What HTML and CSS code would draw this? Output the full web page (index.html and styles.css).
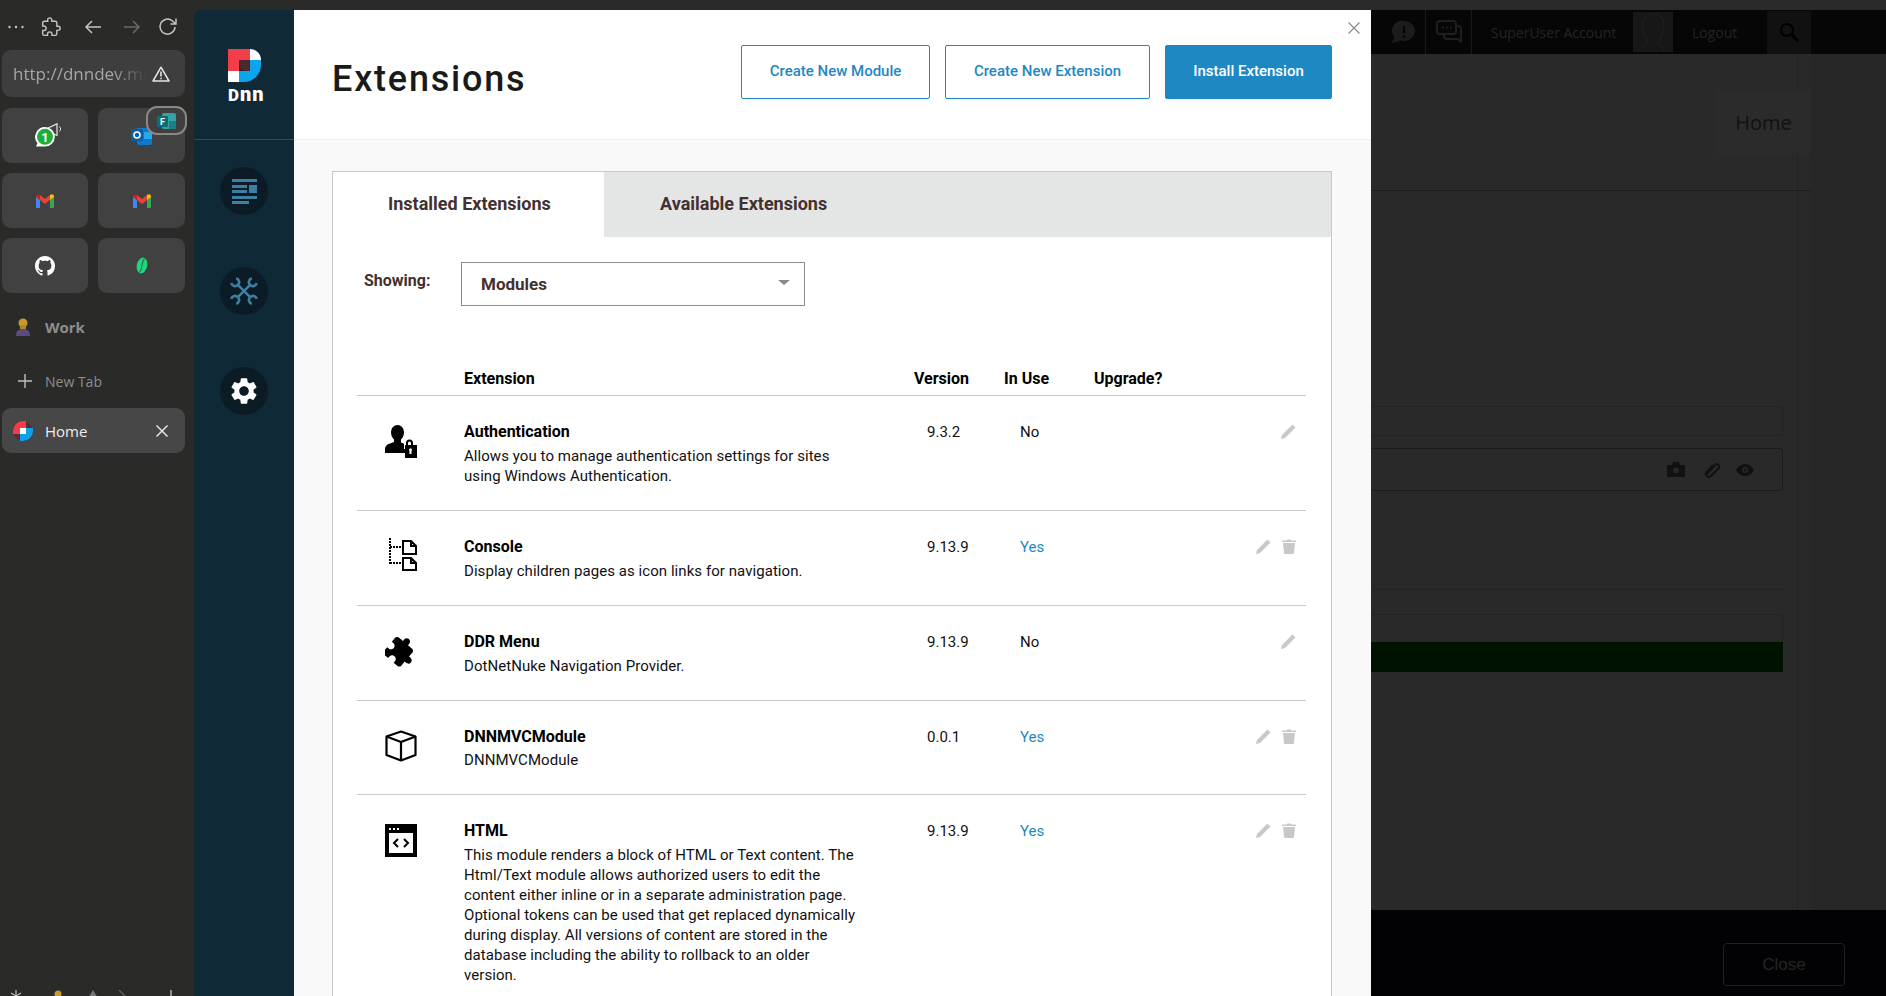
FILE: index.html
```html
<!DOCTYPE html>
<html lang="en">
<head>
  <meta charset="UTF-8" />
  <meta name="viewport" content="width=device-width, initial-scale=1.0" />
  <title>Extensions</title>
  <link rel="stylesheet" href="styles.css">
</head>
<body>
  <svg class="defs" width="0" height="0">
    <symbol id="i-gmail" viewBox="0 0 18 14">
      <path fill="#4285f4" d="M0 2v11a1 1 0 0 0 1 1h3V6z"/>
      <path fill="#34a853" d="M14 6v8h3a1 1 0 0 0 1-1V2z"/>
      <path fill="#ea4335" d="M4 6V1l5 4 5-4v5L9 10z"/>
      <path fill="#c5221f" d="M0 2a2 2 0 0 1 3-1.500L4 1v5L0 3z"/>
      <path fill="#fbbc04" d="M14 1l1-.5A2 2 0 0 1 18 2v1l-4 3z"/>
    </symbol>
    <symbol id="i-pencil" viewBox="0 0 15 15">
      <path fill="#c8c8c8" d="M0 15l1-4L11.500 .5l3 3L4 14z"/>
    </symbol>
    <symbol id="i-trash" viewBox="0 0 14 15">
      <path fill="#c8c8c8" d="M1 4h12l-1 10a1 1 0 0 1-1 1H3a1 1 0 0 1-1-1zM0 1.500h4.500L5.500 .5h3l1 1H14V3H0z"/>
    </symbol>
  </svg>

  <aside class="browser-side">
    <div class="nav-icons">
      <svg class="dots" width="16" height="4" viewBox="0 0 16 4" fill="#c4c4c4"><circle cx="1.500" cy="2" r="1.200"/><circle cx="8" cy="2" r="1.200"/><circle cx="14.500" cy="2" r="1.200"/></svg>
      <svg width="20" height="20" viewBox="0 0 24 24"><path fill="none" stroke="#c4c4c4" stroke-width="1.700" d="M20.500 11H19V7c0-1.100-.9-2-2-2h-4V3.500a2.500 2.500 0 0 0-5 0V5H4c-1.100 0-2 .9-2 2v3.800h1.500a2.700 2.700 0 0 1 0 5.400H2V20c0 1.100.9 2 2 2h3.800v-1.500a2.700 2.700 0 0 1 5.400 0V22H17c1.100 0 2-.9 2-2v-4h1.500a2.500 2.500 0 0 0 0-5z"/></svg>
      <svg class="nav-back" width="18" height="16" viewBox="0 0 18 16"><path fill="none" stroke="#c4c4c4" stroke-width="1.500" d="M17 8H2M8 2L2 8l6 6"/></svg>
      <svg class="nav-fwd" width="18" height="16" viewBox="0 0 18 16"><path fill="none" stroke="#6a6a6a" stroke-width="1.500" d="M1 8h15M10 2l6 6-6 6"/></svg>
      <svg class="nav-reload" width="20" height="20" viewBox="0 0 20 20"><path fill="none" stroke="#c4c4c4" stroke-width="1.500" d="M17 10a7.500 7.500 0 1 1-2.500-6L18 7M18 1.500V7h-5.500"/></svg>
    </div>
    <div class="url-box">
      <span class="url-text">http://dnndev.me</span>
      <svg width="18" height="16" viewBox="0 0 18 16"><path fill="none" stroke="#e4e4e4" stroke-width="1.500" stroke-linejoin="round" d="M9 1.200L17 15H1z"/><path stroke="#e4e4e4" stroke-width="1.600" d="M9 5.500v5M9 11.800v1.500"/></svg>
    </div>
    <div class="pinned">
      <div class="tile">
        <svg width="32" height="26" viewBox="0 0 32 26">
          <path fill="none" stroke="#ddd" stroke-width="1.300" d="M18 5.500L28 .8v11.500l-6-2"/>
          <path fill="none" stroke="#ddd" stroke-width="1" d="M30.500 3.500a3.500 3.500 0 0 1 0 5"/>
          <path fill="#fff" d="M16 4a9.800 9.800 0 0 1 0 19.600H7l1.500-3.500A9.800 9.800 0 0 1 16 4z"/>
          <circle cx="16" cy="13.800" r="8" fill="#1fae3a"/>
          <text x="16" y="18.500" class="tile-num">1</text>
        </svg>
      </div>
      <div class="tile tile-outlook">
        <svg width="21" height="19" viewBox="0 0 21 19">
          <path fill="#0f78c8" d="M6 2h13a2 2 0 0 1 2 2v13a2 2 0 0 1-2 2H8a2 2 0 0 1-2-2z"/>
          <path fill="#28a8ea" d="M13 6h8v7h-8z"/>
          <rect x="0" y="3" width="12" height="12" rx="1" fill="#0a5ea8"/>
          <circle cx="6" cy="9" r="3" fill="none" stroke="#fff" stroke-width="1.500"/>
        </svg>
        <div class="forms-pill">
          <svg width="19" height="16" viewBox="0 0 19 16">
            <rect x="5" y="0" width="14" height="16" rx="2" fill="#33a3a8"/>
            <rect x="12" y="8" width="7" height="8" fill="#1b7f85"/>
            <rect x="0" y="3" width="11" height="11" rx="1" fill="#0c6d75"/>
            <text x="5.500" y="12" class="forms-f">F</text>
          </svg>
        </div>
      </div>
      <div class="tile"><svg width="18" height="14"><use href="#i-gmail"/></svg></div>
      <div class="tile"><svg width="18" height="14"><use href="#i-gmail"/></svg></div>
      <div class="tile">
        <svg width="20" height="20" viewBox="0 0 16 16"><path fill="#fff" d="M8 0C3.580 0 0 3.580 0 8c0 3.540 2.290 6.530 5.470 7.590.4.07.55-.17.55-.38 0-.19-.01-.82-.01-1.490-2.010.37-2.530-.49-2.690-.94-.09-.23-.48-.94-.82-1.130-.28-.15-.68-.52-.01-.53.63-.01 1.080.58 1.230.82.72 1.210 1.870.87 2.330.66.07-.52.28-.87.51-1.070-1.780-.2-3.640-.89-3.640-3.950 0-.87.31-1.590.82-2.150-.08-.2-.36-1.020.08-2.120 0 0 .67-.21 2.200.82.64-.18 1.320-.27 2-.27.68 0 1.360.09 2 .27 1.530-1.040 2.200-.82 2.200-.82.44 1.100.16 1.920.08 2.120.51.56.82 1.270.82 2.150 0 3.070-1.870 3.750-3.650 3.950.29.25.54.73.54 1.480 0 1.070-.01 1.930-.01 2.200 0 .21.15.46.55.38A8.013 8.013 0 0 0 16 8c0-4.420-3.580-8-8-8z"/></svg>
      </div>
      <div class="tile">
        <svg width="14" height="17" viewBox="0 0 14 17"><g transform="rotate(12 7 8.500)"><ellipse cx="7" cy="8.500" rx="5.200" ry="8" fill="#1fd67f"/><path fill="none" stroke="#2a6e4d" stroke-width="1" d="M8 1.500C5 5.500 9 10.500 6 15.500"/></g></svg>
      </div>
    </div>
    <div class="group-row">
      <svg width="14" height="18" viewBox="0 0 14 18">
        <path fill="#5a4a80" d="M0 18c0-5 2-7 7-7s7 2 7 7z"/>
        <circle cx="7" cy="5" r="4.500" fill="#c79a2e"/>
        <path fill="#b5862a" d="M4 7h6v4H4z"/>
      </svg>
      <span>Work</span>
    </div>
    <div class="new-tab">
      <svg width="14" height="14" viewBox="0 0 14 14"><path stroke="#c0c0c0" stroke-width="1.400" d="M7 0v14M0 7h14"/></svg>
      <span>New Tab</span>
    </div>
    <div class="active-tab">
      <svg width="20" height="20" viewBox="0 0 20 20">
        <circle cx="10" cy="10" r="10" fill="#5a2b2f"/>
        <path fill="#ef3e4a" d="M10 0A10 10 0 0 0 0 10v3h7V7h6V0z"/>
        <path fill="#0fa0e8" d="M20 10v-3h-7v6H7v7h3a10 10 0 0 0 10-10z"/>
        <path fill="#fff" d="M7 7h6v6H7z"/>
      </svg>
      <span>Home</span>
      <svg class="tab-x" width="12" height="12" viewBox="0 0 12 12"><path stroke="#e4e4e4" stroke-width="1.500" d="M.5 .5l11 11M11.500 .5l-11 11"/></svg>
    </div>
    <div class="tray">
      <svg width="12" height="12" viewBox="0 0 12 12"><path stroke="#bbb" stroke-width="1.200" d="M6 0v12M1 3l10 6M11 3L1 9"/></svg>
      <svg width="12" height="12" viewBox="0 0 12 12"><circle cx="6" cy="4" r="3.500" fill="#c79a2e"/></svg>
      <svg width="12" height="12" viewBox="0 0 12 12"><path fill="#777" d="M6 0l6 10H0z"/></svg>
      <svg width="12" height="12" viewBox="0 0 12 12"><path fill="none" stroke="#666" stroke-width="1.200" d="M1 0l8 8"/></svg>
      <svg width="12" height="12" viewBox="0 0 12 12"><path stroke="#bbb" stroke-width="1.400" d="M6 0v12M0 9h12"/></svg>
    </div>
  </aside>

  <div class="stage">
    <nav class="rail">
      <div class="rail-logo">
        <svg width="33" height="33" viewBox="0 0 33 33">
          <path fill="#f23d4b" d="M0 0H22V11H11V22H0Z"/>
          <path fill="#4d282d" d="M11 11H22V22H17A6 6 0 0 1 11 16Z"/>
          <path fill="#fff" d="M22 0A11 11 0 0 1 33 11H22Z"/>
          <path fill="#0ca4ea" d="M22 11H33V16A17 17 0 0 1 16 33H11V22H22Z"/>
          <path fill="#fff" d="M0 22H11V33H0Z"/>
        </svg>
        <div class="rail-word">D<span>nn</span></div>
      </div>
      <div class="rail-items">
        <div class="rail-btn">
          <svg width="25" height="25" viewBox="0 0 25 25" fill="#3f7ea3">
            <rect x="0" y="0" width="25" height="3"/>
            <rect x="0" y="6" width="15" height="3"/>
            <rect x="17" y="6" width="8" height="8"/>
            <rect x="0" y="11" width="15" height="3"/>
            <rect x="0" y="17" width="25" height="3"/>
            <rect x="0" y="22" width="17" height="3"/>
          </svg>
        </div>
        <div class="rail-btn">
          <svg width="28" height="28" viewBox="0 0 28 28" fill="none" stroke="#3f7ea3" stroke-width="2.600">
            <g transform="rotate(45 14 14)">
              <path d="M14 5V23M10.500 -.5a4 4 0 1 0 7 0M10.500 28.500a4 4 0 1 1 7 0"/>
            </g>
            <g transform="rotate(-45 14 14)">
              <path d="M14 5V23M10.500 -.5a4 4 0 1 0 7 0M10.500 28.500a4 4 0 1 1 7 0"/>
            </g>
          </svg>
        </div>
        <div class="rail-btn">
          <svg width="32" height="32" viewBox="0 0 24 24"><path fill="#fff" d="M19.140 12.940c.04-.3.06-.61.06-.94 0-.32-.02-.64-.07-.94l2.030-1.580c.18-.14.23-.41.12-.61l-1.920-3.320c-.12-.22-.37-.29-.59-.22l-2.390.96c-.5-.38-1.030-.7-1.620-.94l-.36-2.540c-.04-.24-.24-.41-.48-.41h-3.840c-.24 0-.43.17-.47.41l-.36 2.540c-.59.24-1.130.57-1.620.94l-2.390-.96c-.22-.08-.47 0-.59.22L2.740 8.870c-.12.21-.08.47.12.61l2.030 1.580c-.05.3-.09.63-.09.94s.02.64.07.94l-2.030 1.580c-.18.14-.23.41-.12.61l1.920 3.320c.12.22.37.29.59.22l2.390-.96c.5.38 1.030.7 1.620.94l.36 2.540c.05.24.24.41.48.41h3.840c.24 0 .44-.17.47-.41l.36-2.540c.59-.24 1.130-.56 1.620-.94l2.390.96c.22.08.47 0 .59-.22l1.920-3.320c.12-.22.07-.47-.12-.61l-2.010-1.580zM12 15.600c-1.980 0-3.600-1.620-3.600-3.600s1.620-3.600 3.600-3.600 3.600 1.620 3.600 3.600-1.620 3.600-3.600 3.600z"/></svg>
        </div>
      </div>
    </nav>

    <section class="panel">
      <svg class="panel-close" width="12" height="12" viewBox="0 0 12 12"><path stroke="#8c8c8c" stroke-width="1.200" d="M.5 .5l11 11M11.500 .5l-11 11"/></svg>
      <header class="panel-head">
        <h1>Extensions</h1>
        <div class="head-btns">
          <button class="btn btn-module">Create New Module</button>
          <button class="btn btn-ext">Create New Extension</button>
          <button class="btn btn-primary">Install Extension</button>
        </div>
      </header>
      <div class="panel-body">
        <div class="ext-box">
          <div class="tabs">
            <div class="tab tab-active">Installed Extensions</div>
            <div class="tab">Available Extensions</div>
          </div>
          <div class="filter">
            <label>Showing:</label>
            <div class="select">
              <span>Modules</span>
              <i class="caret"></i>
            </div>
          </div>
          <div class="ext-table">
            <div class="ext-row ext-header">
              <div></div>
              <div>Extension</div>
              <div>Version</div>
              <div>In Use</div>
              <div>Upgrade?</div>
              <div></div>
            </div>

            <div class="ext-row">
              <div class="ext-icon">
                <svg width="32" height="33" viewBox="0 0 32 33" fill="#000">
                  <path d="M6 7a6.500 7 0 0 1 13 0c0 3-1 6-3 7.500v3l3 1.200V24h3v4H0v-4c0-3 2-4.500 5-5.500l4-1.500v-2.500C7 13 6 10 6 7z"/>
                  <path d="M20 33V20h1v-2a3.500 3.500 0 0 1 7 0v2h4v13z"/>
                  <path fill="#fff" d="M23 20v-2a1.500 1.500 0 0 1 3 0v2zM27 25a1.500 1.500 0 1 0-2.500 1v3h2v-3z"/>
                </svg>
              </div>
              <div class="ext-info">
                <strong>Authentication</strong>
                <p>Allows you to manage authentication settings for sites using Windows Authentication.</p>
              </div>
              <div class="ext-ver">9.3.2</div>
              <div class="ext-use">No</div>
              <div></div>
              <div class="ext-actions">
                <svg width="15" height="15"><use href="#i-pencil"/></svg>
              </div>
            </div>

            <div class="ext-row">
              <div class="ext-icon ext-icon-console">
                <svg width="28" height="33" viewBox="0 0 28 33" fill="none" stroke="#000" stroke-width="2">
                  <path stroke-dasharray="2 1" d="M1 0v26M1 9h11M1 25h11"/>
                  <path d="M14 3h8l5 5v8H14zM22 3v5h5"/>
                  <path d="M14 20h8l5 5v7H14zM22 20v5h5"/>
                </svg>
              </div>
              <div class="ext-info">
                <strong>Console</strong>
                <p>Display children pages as icon links for navigation.</p>
              </div>
              <div class="ext-ver">9.13.9</div>
              <div class="ext-use ext-yes">Yes</div>
              <div></div>
              <div class="ext-actions">
                <svg width="15" height="15"><use href="#i-pencil"/></svg>
                <svg width="14" height="15"><use href="#i-trash"/></svg>
              </div>
            </div>

            <div class="ext-row">
              <div class="ext-icon">
                <svg width="32" height="33" viewBox="0 0 24 24"><path transform="rotate(40 12 12)" fill="#000" d="M20.500 11H19V7c0-1.100-.9-2-2-2h-4V3.500C13 2.120 11.880 1 10.500 1S8 2.120 8 3.500V5H4c-1.100 0-1.990.9-1.990 2v3.800H3.500c1.490 0 2.700 1.210 2.700 2.700s-1.210 2.700-2.700 2.700H2V20c0 1.100.9 2 2 2h3.800v-1.500c0-1.490 1.210-2.700 2.700-2.700 1.490 0 2.700 1.210 2.700 2.700V22H17c1.100 0 2-.9 2-2v-4h1.500c1.380 0 2.500-1.120 2.500-2.500S21.880 11 20.500 11z"/></svg>
              </div>
              <div class="ext-info">
                <strong>DDR Menu</strong>
                <p>DotNetNuke Navigation Provider.</p>
              </div>
              <div class="ext-ver">9.13.9</div>
              <div class="ext-use">No</div>
              <div></div>
              <div class="ext-actions">
                <svg width="15" height="15"><use href="#i-pencil"/></svg>
              </div>
            </div>

            <div class="ext-row ext-row-short">
              <div class="ext-icon">
                <svg width="32" height="32" viewBox="0 0 32 32" fill="none" stroke="#000" stroke-width="2.200" stroke-linejoin="round">
                  <path d="M16 1.500L30.500 6.500V25L16 30.500 1.500 25V6.500z"/>
                  <path d="M1.500 6.500L16 12l14.500-5.500M16 12v18.500"/>
                </svg>
              </div>
              <div class="ext-info">
                <strong>DNNMVCModule</strong>
                <p>DNNMVCModule</p>
              </div>
              <div class="ext-ver">0.0.1</div>
              <div class="ext-use ext-yes">Yes</div>
              <div></div>
              <div class="ext-actions">
                <svg width="15" height="15"><use href="#i-pencil"/></svg>
                <svg width="14" height="15"><use href="#i-trash"/></svg>
              </div>
            </div>

            <div class="ext-row ext-row-html">
              <div class="ext-icon">
                <svg width="32" height="33" viewBox="0 0 32 33">
                  <rect width="32" height="33" fill="#000"/>
                  <rect x="4" y="9" width="24" height="20" fill="#fff"/>
                  <path fill="#fff" d="M4 4h2v2H4zM8 4h2v2H8zM12 4h2v2h-2z"/>
                  <path fill="none" stroke="#000" stroke-width="2" d="M13 15l-4 4 4 4M19 15l4 4-4 4"/>
                </svg>
              </div>
              <div class="ext-info">
                <strong>HTML</strong>
                <p>This module renders a block of HTML or Text content. The Html/Text module allows authorized users to edit the content either inline or in a separate administration page. Optional tokens can be used that get replaced dynamically during display. All versions of content are stored in the database including the ability to rollback to an older version.</p>
              </div>
              <div class="ext-ver">9.13.9</div>
              <div class="ext-use ext-yes">Yes</div>
              <div></div>
              <div class="ext-actions">
                <svg width="15" height="15"><use href="#i-pencil"/></svg>
                <svg width="14" height="15"><use href="#i-trash"/></svg>
              </div>
            </div>
          </div>
        </div>
      </div>
    </section>

    <div class="backdrop">
      <div class="site-bar">
        <svg class="bar-alert" width="26" height="24" viewBox="0 0 26 24"><path fill="#1c1c1c" d="M14 1a11 10 0 1 1-4 19.300C8 22 4 23 1 23c2-2 3-3.500 3.200-6A10 10 0 0 1 14 1z"/><path stroke="#060606" stroke-width="2.500" d="M14 6v7M14 15v3"/></svg>
        <div class="bar-chat">
          <svg width="26" height="24" viewBox="0 0 26 24" fill="none" stroke="#1f1f1f" stroke-width="2" stroke-linejoin="round">
            <rect x="1" y="1" width="19" height="13" rx="3"/>
            <path d="M21 6h1a3 3 0 0 1 3 3v10l0 3-3-3H11a3 3 0 0 1-3-3v-1"/>
            <path stroke-dasharray="2 2" d="M6 7.500h10"/>
          </svg>
        </div>
        <span class="bar-user">SuperUser Account</span>
        <div class="bar-avatar">
          <svg width="40" height="40" viewBox="0 0 40 40"><path fill="none" stroke="#1e1e1e" stroke-width="1.500" d="M9 39c0-5 4-6 6-7 0-3-6-10-6-20 0-6 5-10 11-10s11 4 11 10c0 10-6 17-6 20 2 1 6 2 6 7"/></svg>
        </div>
        <span class="bar-logout">Logout</span>
        <div class="bar-search">
          <svg width="20" height="20" viewBox="0 0 20 20" fill="none" stroke="#000" stroke-width="2"><circle cx="8" cy="8" r="6"/><path stroke-width="3" d="M12.500 12.500L19 19"/></svg>
        </div>
      </div>
      <div class="page-wrap">
        <div class="page-main">
          <div class="page-head"><div class="page-tab">Home</div></div>
          <div class="page-content">
            <div class="dash-box"></div>
            <div class="fake-input">
              <svg class="input-cam" width="18" height="15" viewBox="0 0 18 15"><path fill="#111" d="M0 3h5l1-3h6l1 3h5v12H0z"/><circle cx="9" cy="8.500" r="3" fill="#272727"/></svg>
              <svg width="18" height="16" viewBox="0 0 18 16" fill="none" stroke="#111" stroke-width="2"><path d="M3 13L12 3c2-2 5 0 4 3l-8 8c-2 2-6 0-5-3l7-8"/></svg>
              <svg width="18" height="12" viewBox="0 0 18 12"><path fill="#111" d="M0 6c4-8 14-8 18 0-4 8-14 8-18 0z"/><circle cx="9" cy="6" r="3" fill="#272727"/><circle cx="9" cy="6" r="1.200" fill="#111"/></svg>
            </div>
            <div class="thin-line"></div>
            <div class="dash-row"></div>
            <div class="green-bar"></div>
          </div>
        </div>
      </div>
      <div class="page-foot">
        <button class="close-btn">Close</button>
      </div>
    </div>
  </div>
</body>
</html>
```

FILE: styles.css
```css
html, body {
  height: 100%;
}
body {
  margin: 0;
  width: 1886px;
  height: 996px;
  overflow: hidden;
  display: flex;
  background-color: #2a2a29;
  font-family: 'Roboto', 'Liberation Sans', sans-serif;
}
.defs {
  position: absolute;
}
svg {
  display: block;
}

/* browser side bar */
.browser-side {
  width: 194px;
  flex: none;
  height: 996px;
  display: flex;
  flex-direction: column;
  font-family: 'Open Sans', 'Noto Sans', sans-serif;
  overflow: hidden;
}
.nav-icons {
  display: flex;
  align-items: center;
  height: 50px;
  padding: 4px 0 0 8px;
  box-sizing: border-box;
}
.dots {
  margin-right: 17px;
}
.nav-back {
  margin-left: 23px;
}
.nav-fwd {
  margin-left: 21px;
}
.nav-reload {
  margin-left: 17px;
}
.url-box {
  margin: 0 9px 0 2px;
  height: 47px;
  background: #3e3e3e;
  border-radius: 9px;
  display: flex;
  align-items: center;
  justify-content: space-between;
  padding: 0 15px 0 11px;
}
.url-text {
  width: 133px;
  overflow: hidden;
  white-space: nowrap;
  color: #a6a6a6;
  font-size: 17px;
  -webkit-mask-image: linear-gradient(to right, #000 75%, transparent);
  mask-image: linear-gradient(to right, #000 75%, transparent);
}
.pinned {
  display: grid;
  grid-template-columns: 86px 87px;
  grid-auto-rows: 55px;
  gap: 10px;
  margin: 11px 0 0 2px;
}
.tile {
  position: relative;
  background: #414141;
  border-radius: 9px;
  display: flex;
  align-items: center;
  justify-content: center;
}
.tile-num {
  fill: #fff;
  font-size: 13px;
  font-weight: 700;
  text-anchor: middle;
  font-family: 'Roboto', sans-serif;
}
.forms-pill {
  position: absolute;
  top: -2px;
  right: -2px;
  width: 41px;
  height: 29px;
  box-sizing: border-box;
  background: #3f3f3f;
  border: 2px solid #888;
  border-radius: 11px;
  display: flex;
  align-items: center;
  justify-content: center;
}
.forms-f {
  fill: #fff;
  font-size: 9px;
  font-weight: 700;
  text-anchor: middle;
  font-family: 'Roboto', sans-serif;
}
.group-row {
  display: flex;
  align-items: center;
  gap: 15px;
  margin: 22px 0 0 16px;
  height: 24px;
  color: #8e8e8e;
  font-size: 15px;
  font-weight: 700;
}
.new-tab {
  display: flex;
  align-items: center;
  gap: 13px;
  margin: 30px 0 0 18px;
  height: 24px;
  color: #8e8e8e;
  font-size: 14px;
}
.active-tab {
  display: flex;
  align-items: center;
  margin: 15px 9px 0 2px;
  height: 45px;
  padding: 0 17px 0 11px;
  background: #474747;
  border-radius: 9px;
  color: #eee;
  font-size: 15px;
}
.active-tab span {
  margin-left: 12px;
  flex: 1;
}
.tray {
  margin-top: auto;
  margin-bottom: -6px;
  display: grid;
  grid-template-columns: 42px 35px 31px 47px 12px;
  padding-left: 10px;
}

/* stage: rail, modal panel and page behind */
.stage {
  flex: 1;
  display: flex;
  padding-top: 10px;
  min-width: 0;
}
.rail {
  width: 100px;
  flex: none;
  background: #0f2936;
  border-top-left-radius: 7px;
}
.rail-logo {
  height: 130px;
  box-sizing: border-box;
  padding: 39px 0 0 34px;
  border-bottom: 1px solid #2a4c62;
}
.rail-word {
  margin-top: 4px;
  color: #fff;
  font-size: 17px;
  line-height: 17px;
  font-weight: 900;
  letter-spacing: 1px;
}
.rail-word span {
  font-size: 20px;
}
.rail-items {
  display: flex;
  flex-direction: column;
  gap: 52px;
  padding: 27px 0 0 26px;
}
.rail-btn {
  width: 48px;
  height: 48px;
  border-radius: 50%;
  background: #0b1c26;
  display: flex;
  align-items: center;
  justify-content: center;
}
.rail-btn svg {
  overflow: visible;
}

.panel {
  position: relative;
  width: 1077px;
  flex: none;
  background: #f9f9f9;
  display: flex;
  flex-direction: column;
}
.panel-close {
  position: absolute;
  top: 12px;
  right: 11px;
}
.panel-head {
  height: 129px;
  flex: none;
  background: #fff;
  border-bottom: 1px solid #eee;
  display: flex;
  justify-content: space-between;
  padding: 0 39px 0 38px;
}
.panel-head h1 {
  margin: 45px 0 0;
  font-size: 36px;
  line-height: 48px;
  font-weight: 500;
  letter-spacing: 1.8px;
  color: #1a1a1a;
}
.head-btns {
  display: flex;
  gap: 15px;
  padding-top: 35px;
}
.btn {
  height: 54px;
  background: #fff;
  color: #1e88c3;
  border: 1px solid #1e88c3;
  border-radius: 2px;
  font-family: inherit;
  font-size: 15px;
  font-weight: 500;
  padding: 0 0 2px;
  cursor: pointer;
}
.btn-module {
  width: 189px;
}
.btn-ext {
  width: 205px;
}
.btn-primary {
  width: 167px;
  background: #1e88c3;
  color: #fff;
}
.panel-body {
  padding: 31px 39px 0 38px;
}
.ext-box {
  background: #fff;
  border: 1px solid #c8c8c8;
  height: 900px;
}
.tabs {
  display: flex;
  background: #e4e6e5;
  height: 65px;
}
.tab {
  display: flex;
  align-items: center;
  padding: 0 56px 2px;
  font-size: 18px;
  font-weight: 700;
  white-space: nowrap;
  color: #43302f;
}
.tab-active {
  width: 271px;
  box-sizing: border-box;
  padding: 0 0 2px 55px;
  background: #fff;
}
.filter {
  display: flex;
  align-items: flex-start;
  padding: 25px 0 0 31px;
}
.filter label {
  width: 97px;
  font-size: 16px;
  line-height: 18px;
  font-weight: 700;
  color: #43302f;
  padding-top: 10px;
}
.select {
  width: 344px;
  height: 44px;
  box-sizing: border-box;
  border: 1px solid #8e8e8e;
  display: flex;
  align-items: center;
  justify-content: space-between;
  padding: 0 14px 0 19px;
  font-size: 17px;
  font-weight: 700;
  color: #43302f;
}
.caret {
  width: 0;
  height: 0;
  border-left: 6px solid transparent;
  border-right: 6px solid transparent;
  border-top: 5px solid #8a8a8a;
  margin-bottom: 3px;
}
.ext-table {
  margin: 0 25px 0 24px;
  padding-top: 63px;
  font-size: 15px;
  line-height: 20px;
  color: #111;
}
.ext-row {
  display: grid;
  grid-template-columns: 107px 450px 90px 90px 120px 1fr;
  padding: 26px 0 24px;
  border-bottom: 1px solid #c8c8c8;
}
.ext-header {
  padding: 0 0 6px;
  font-size: 16px;
  font-weight: 700;
  color: #000;
}
.ext-icon {
  padding: 3px 0 0 28px;
}
.ext-icon-console {
  padding: 1px 0 0 32px;
}
.ext-info strong {
  display: block;
  font-size: 16px;
  color: #000;
}
.ext-info p {
  margin: 4px 0 0;
  width: 396px;
  letter-spacing: .06px;
}
.ext-row-short .ext-info p {
  margin-top: 3px;
}
.ext-ver {
  padding-left: 13px;
}
.ext-use {
  padding-left: 16px;
}
.ext-yes {
  color: #1e88c3;
}
.ext-actions {
  display: flex;
  justify-content: flex-end;
  align-items: flex-start;
  gap: 11px;
  padding: 2px 10px 0 0;
}

/* dimmed page behind the modal */
.backdrop {
  flex: 1;
  min-width: 0;
  display: flex;
  flex-direction: column;
  background: #272727;
  font-family: 'Open Sans', 'Noto Sans', sans-serif;
}
.site-bar {
  height: 44px;
  flex: none;
  background: #060606;
  display: flex;
  align-items: center;
  color: #242424;
  font-size: 14px;
}
.bar-alert {
  margin-left: 19px;
}
.bar-chat {
  display: flex;
  align-items: center;
  justify-content: center;
  width: 45px;
  height: 44px;
  margin-left: 9px;
  border-left: 1px solid #1a1a1a;
  border-right: 1px solid #1a1a1a;
}
.bar-user {
  margin-left: 19px;
  width: 142px;
  white-space: nowrap;
}
.bar-avatar {
  width: 40px;
  height: 40px;
  background: #171717;
}
.bar-logout {
  margin-left: 19px;
  width: 75px;
}
.bar-search {
  width: 44px;
  height: 43px;
  background: #111;
  display: flex;
  align-items: center;
  justify-content: center;
}
.page-wrap {
  flex: 1;
  min-height: 0;
  width: 440px;
  background: #292929;
}
.page-main {
  height: 100%;
  box-sizing: border-box;
  width: 427px;
  border-right: 1px dotted #1f1f1f;
}
.page-head {
  height: 137px;
  box-sizing: border-box;
  border-bottom: 1px solid #1d1d1d;
  position: relative;
  width: 440px;
}
.page-tab {
  position: absolute;
  top: 37px;
  right: 0;
  width: 95px;
  height: 63px;
  background: #2b2b2b;
  color: #111;
  font-size: 20px;
  text-align: center;
  line-height: 63px;
}
.page-content {
  width: 412px;
  padding-top: 215px;
}
.dash-box {
  height: 28px;
  border-top: 1px dotted #1d1d1d;
  border-bottom: 1px dotted #1d1d1d;
  border-right: 1px dotted #1d1d1d;
}
.fake-input {
  height: 41px;
  margin-top: 12px;
  border: 1px solid #1c1c1c;
  border-left: 0;
  border-radius: 0 3px 3px 0;
  display: flex;
  align-items: center;
  justify-content: flex-end;
  gap: 15px;
  padding-right: 28px;
}
.input-cam {
  margin-right: 3px;
}
.thin-line {
  margin-top: 98px;
  border-top: 1px solid #242424;
}
.dash-row {
  margin-top: 24px;
  height: 27px;
  border-top: 1px dotted #1d1d1d;
  border-right: 1px dotted #1d1d1d;
}
.green-bar {
  height: 30px;
  background: #001300;
}
.page-foot {
  height: 86px;
  flex: none;
  background: #020204;
  display: flex;
  justify-content: flex-end;
  padding: 33px 41px 0 0;
  box-sizing: border-box;
}
.close-btn {
  width: 122px;
  height: 43px;
  background: transparent;
  border: 1px solid #222;
  border-radius: 4px;
  color: #252525;
  font-family: 'Liberation Sans', sans-serif;
  font-size: 17px;
}
```
